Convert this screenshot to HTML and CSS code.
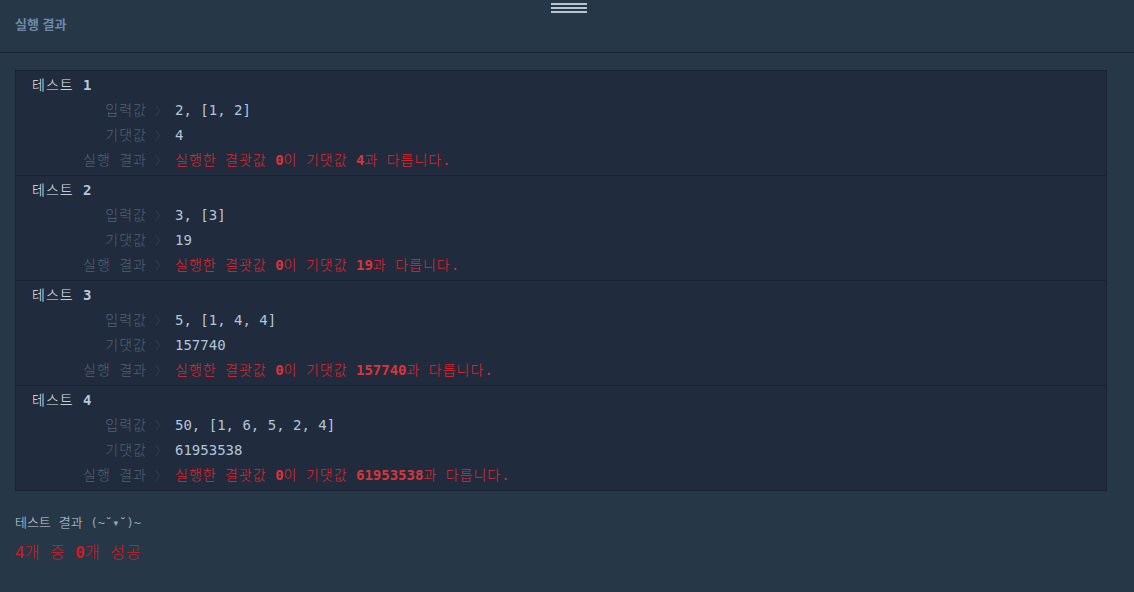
FILE: index.html
```html
<!DOCTYPE html>
<html lang="ko">
<head>
<meta charset="utf-8">
<link rel="stylesheet" href="styles.css">
</head>
<body>
<div class="panel">
  <div class="handle"><span></span><span></span><span></span></div>
  <div class="header"><span class="title">실행 결과</span></div>
  <div class="content">
    <div class="results">
      <div class="test">
        <div class="test-title">테스트 <b>1</b></div>
        <div class="row"><span class="label">입력값</span><span class="sep">〉</span><span class="val">2, [1, 2]</span></div>
        <div class="row"><span class="label">기댓값</span><span class="sep">〉</span><span class="val">4</span></div>
        <div class="row"><span class="label">실행 결과</span><span class="sep">〉</span><span class="err">실행한 결괏값 <b>0</b>이 기댓값 <b>4</b>과 다릅니다.</span></div>
      </div>
      <div class="test">
        <div class="test-title">테스트 <b>2</b></div>
        <div class="row"><span class="label">입력값</span><span class="sep">〉</span><span class="val">3, [3]</span></div>
        <div class="row"><span class="label">기댓값</span><span class="sep">〉</span><span class="val">19</span></div>
        <div class="row"><span class="label">실행 결과</span><span class="sep">〉</span><span class="err">실행한 결괏값 <b>0</b>이 기댓값 <b>19</b>과 다릅니다.</span></div>
      </div>
      <div class="test">
        <div class="test-title">테스트 <b>3</b></div>
        <div class="row"><span class="label">입력값</span><span class="sep">〉</span><span class="val">5, [1, 4, 4]</span></div>
        <div class="row"><span class="label">기댓값</span><span class="sep">〉</span><span class="val">157740</span></div>
        <div class="row"><span class="label">실행 결과</span><span class="sep">〉</span><span class="err">실행한 결괏값 <b>0</b>이 기댓값 <b>157740</b>과 다릅니다.</span></div>
      </div>
      <div class="test">
        <div class="test-title">테스트 <b>4</b></div>
        <div class="row"><span class="label">입력값</span><span class="sep">〉</span><span class="val">50, [1, 6, 5, 2, 4]</span></div>
        <div class="row"><span class="label">기댓값</span><span class="sep">〉</span><span class="val">61953538</span></div>
        <div class="row"><span class="label">실행 결과</span><span class="sep">〉</span><span class="err">실행한 결괏값 <b>0</b>이 기댓값 <b>61953538</b>과 다릅니다.</span></div>
      </div>
    </div>
    <div class="summary-title">테스트 결과 <span class="face">(~˘▾˘)~</span></div>
    <div class="summary"><span class="num">4</span>개 중 <b>0</b>개 성공</div>
  </div>
</div>
</body>
</html>
```

FILE: styles.css
```css
html, body {
  margin: 0;
  padding: 0;
  background: #263747;
  height: 100%;
}
body {
  font-family: "DejaVu Sans Mono", "Noto Sans CJK KR", monospace;
  font-size: 14px;
  color: #d0dbe6;
  overflow: hidden;
}
.panel {
  position: relative;
}
.handle {
  position: absolute;
  left: 551px;
  top: 3px;
  width: 36px;
  display: flex;
  flex-direction: column;
  gap: 2px;
}
.handle span {
  display: block;
  height: 2px;
  background: #b8c5d1;
}
.header {
  height: 53px;
  box-sizing: border-box;
  border-bottom: 1px solid #172230;
  display: flex;
  align-items: center;
  padding: 0 15px 6px;
}
.title {
  font-family: "Noto Sans CJK KR", sans-serif;
  font-weight: 700;
  font-size: 13px;
  color: #6c8aa8;
}
.content {
  padding: 17px 27px 0 15px;
}
.results {
  background: #202b3d;
  border: 1px solid #172234;
}
.test {
  height: 105px;
  box-sizing: border-box;
  border-top: 1px solid #172234;
  padding-top: 1px;
}
.test:first-child {
  border-top: none;
  height: 104px;
}
.test-title {
  height: 26px;
  line-height: 26px;
  padding-left: 16px;
  font-weight: 300;
  color: #e3e8ee;
  white-space: pre;
  letter-spacing: 1px;
}
.test-title b {
  font-weight: 700;
  color: #b5c9de;
  letter-spacing: 0;
}
.row {
  height: 25px;
  line-height: 25px;
  display: flex;
  white-space: pre;
}
.label {
  width: 131px;
  text-align: right;
  font-weight: 300;
  color: #526274;
  letter-spacing: 1px;
  word-spacing: -1px;
}
.sep {
  width: 28px;
  text-align: center;
  font-family: "Noto Sans CJK KR", sans-serif;
  font-weight: 300;
  color: #3a4a5b;
  font-size: 12px;
}
.val {
  color: #b2c6da;
  font-weight: 400;
}
.err {
  color: #e4262c;
  font-weight: 300;
  letter-spacing: 1px;
  word-spacing: -1px;
}
.err b {
  font-weight: 700;
  color: #d9343a;
  letter-spacing: 0;
}
.summary-title {
  margin-top: 24px;
  font-weight: 300;
  font-size: 13px;
  color: #c9d3de;
  line-height: 16px;
  white-space: pre;
}
.face {
  color: #90a8c2;
  font-size: 12px;
}
.summary {
  margin-top: 12px;
  font-weight: 300;
  font-size: 16px;
  color: #cc1d24;
  line-height: 20px;
  white-space: pre;
  letter-spacing: 1px;
  word-spacing: -1px;
}
.summary b, .summary .num {
  font-weight: 700;
  letter-spacing: 0;
}
.summary .num {
  font-weight: 400;
}
```
